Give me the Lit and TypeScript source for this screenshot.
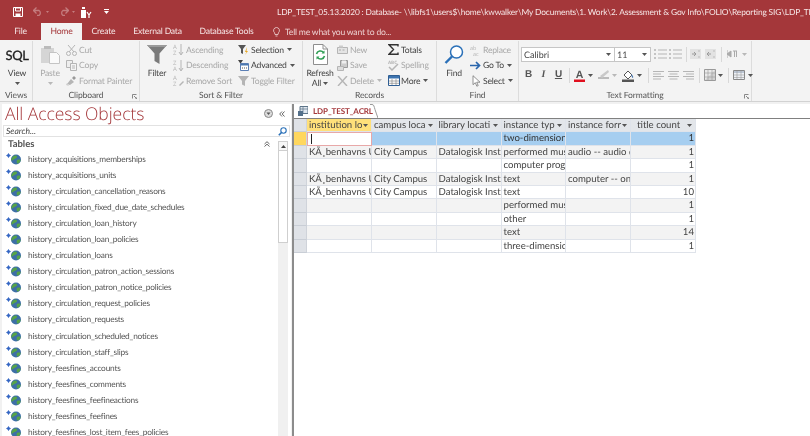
import { LitElement, html, css, svg } from "lit";
import { customElement } from "lit/decorators.js";

const TITLE = "LDP_TEST_05.13.2020 : Database- \\\\libfs1\\users$\\home\\kwwalker\\My Documents\\1. Work\\2. Assessment & Gov Info\\FOLIO\\Reporting SIG\\LDP_TEST_05.13.2020.accdb";

const ic = (w: number, h: number, body: unknown, cls = "") =>
  html`<svg class="ic ${cls}" width=${w} height=${h} viewBox="0 0 ${w} ${h}">${body}</svg>`;

const caret = (dis = false) =>
  html`<svg class="ic" width="5" height="3" viewBox="0 0 5 3"><path d="M0 0h5L2.5 3z" fill=${dis ? "#b8b8b8" : "#555"} /></svg>`;

const G = "#b5b5b5";
const icons: Record<string, unknown> = {
  cut: ic(11, 12, svg`<path d="M2 1l6 7M9 1L3 8" stroke="${G}" fill="none"/><circle cx="2.5" cy="9.5" r="2" stroke="${G}" fill="none"/><circle cx="8.5" cy="9.5" r="2" stroke="${G}" fill="none"/>`),
  copy: ic(11, 11, svg`<path d="M.5 .5h6v7h-6z" fill="#eee" stroke="${G}"/><path d="M4.5 3.5h6v7h-6z" fill="#f4f4f4" stroke="${G}"/><path d="M6 6h3M6 8h3" stroke="${G}"/>`),
  painter: ic(11, 11, svg`<path d="M1 9l4-5 3 3-4 3z" fill="${G}"/><path d="M6 3l2-2 2 2-2 2z" fill="#999"/><path d="M0 10l3 1-2-3z" fill="#ccc"/>`),
  asc: ic(11, 13, svg`<text x="0" y="5.5" font-size="6" fill="${G}" font-family="Open Sans">A</text><text x="0" y="12" font-size="6" fill="${G}" font-family="Open Sans">Z</text><path d="M8 1v10M6 9l2 3 2-3" stroke="${G}" fill="none"/>`),
  desc: ic(11, 13, svg`<text x="0" y="5.5" font-size="6" fill="${G}" font-family="Open Sans">Z</text><text x="0" y="12" font-size="6" fill="${G}" font-family="Open Sans">A</text><path d="M8 1v10M6 9l2 3 2-3" stroke="${G}" fill="none"/>`),
  rmsort: ic(11, 13, svg`<text x="0" y="5.5" font-size="6" fill="${G}" font-family="Open Sans">A</text><text x="0" y="12" font-size="6" fill="${G}" font-family="Open Sans">Z</text><path d="M6 11l4-4 1 1-4 4z" fill="${G}"/>`),
  selection: ic(11, 11, svg`<path d="M0 1h8L5 5v5L3 9V5z" fill="#555"/><path d="M9 3L7 8h1.5L7 11l3-4H8.5z" fill="#e9a825"/>`),
  advanced: ic(11, 11, svg`<path d="M0 0h5L3 3v2L2 4.5V3z" fill="#444"/><path d="M2.5 3.5h8v7h-8z" fill="#fff" stroke="#5b7fb5"/><path d="M3 4h7v1.5H3z" fill="#4a78b0"/><path d="M4 8h1M6 8h1M8 8h1" stroke="#555"/>`),
  toggle: ic(11, 11, svg`<path d="M0 1h11L7 6v5L4 9.5V6z" fill="${G}"/>`),
  newrec: ic(11, 9, svg`<path d="M.5 2.5h10v6H.5z" fill="#e4e4e4" stroke="${G}"/><path d="M2 .5h4v2H2z" fill="#ccc"/><path d="M2 5h2M5.5 5h2" stroke="#aaa"/>`),
  saverec: ic(11, 11, svg`<path d="M3.5 .5h7v7h-7z" fill="#ccc" stroke="#9a9a9a"/><path d="M5 .5h4v3H5z" fill="#eee"/><path d="M.5 6.5h6v4h-6z" fill="#ddd" stroke="${G}"/>`),
  delete: ic(11, 10, svg`<path d="M1 0l9 10M10 0L1 10" stroke="${G}" stroke-width="1.4"/>`),
  totals: ic(11, 11, svg`<path d="M10 2.5V.7H1l4.500 4.800L1 10.300h9V8.500" fill="none" stroke="#333" stroke-width="1.4"/>`),
  spelling: ic(11, 12, svg`<text x="0" y="5" font-size="4.5" font-weight="700" fill="${G}" font-family="Open Sans">ABC</text><path d="M1 8l3 3 6-6" fill="none" stroke="${G}" stroke-width="1.5"/>`),
  more: ic(12, 11, svg`<path d="M.5 .5h11v10H.5z" fill="#fff" stroke="#2f5e93"/><path d="M1 1h10v2.500H1z" fill="#3d74b0"/><path d="M1 6h10M1 8.300h10M4 4v6M8 4v6" stroke="#8a8a8a" stroke-width=".7"/>`),
  replace: ic(11, 12, svg`<text x="0" y="5.5" font-size="5.5" fill="${G}" font-family="Open Sans">ab</text><text x="3" y="11.5" font-size="5.5" fill="${G}" font-family="Open Sans">ac</text>`),
  goto: ic(11, 9, svg`<path d="M0 4.500h9M6 1l3.500 3.500L6 8" fill="none" stroke="#2a66ad" stroke-width="1.7"/>`),
  select: ic(10, 12, svg`<path d="M2 .7v9l2.300-2 1.500 3.500 1.400-.6L5.700 7.200H9z" fill="#fff" stroke="#777" stroke-width=".8"/>`),
};

const small = (icon: string, label: string, dis = false, hasCaret = false) => html`
  <div class="small ${dis ? "dis" : ""}">
    <span class="sicon">${icons[icon]}</span><span class="stext">${label}</span>${hasCaret
      ? html`<span class="scaret">${caret(dis)}</span>`
      : ""}
  </div>`;

const filterBig = ic(20, 19, svg`<path d="M0 0h20L12.500 8.500V19L7.500 16V8.500z" fill="#7a7a7a"/><path d="M0 0h20l-2 2H2z" fill="#9a9a9a"/>`);
const pasteBig = ic(21, 19, svg`<path d="M1 3h13v15H1z" fill="#d5d5d5"/><path d="M4 1h7v3H4z" fill="#bbb"/><path d="M9.500 7.500h7l3 3v8h-10z" fill="#fafafa" stroke="#c4c4c4"/>`);
const refreshBig = ic(15, 21, svg`<path d="M.5 .5h9.500l4.500 4.500v15.500H.5z" fill="#fff" stroke="#8e8e8e"/><path d="M10 .5v4.500h4.500" fill="none" stroke="#8e8e8e"/><path d="M3.500 10a4 4 0 0 1 7-1.500M11.500 12a4 4 0 0 1-7 1.500" fill="none" stroke="#2f9e55" stroke-width="1.6"/><path d="M11.500 6.500v3h-3zM3.500 15.500v-3h3z" fill="#2f9e55"/>`);
const findBig = ic(20, 19, svg`<circle cx="12.500" cy="7" r="6" fill="#fff" stroke="#2a70b8" stroke-width="1.5"/><path d="M8 11.500L1.500 18" stroke="#2a70b8" stroke-width="2.4"/>`);

const globe = ic(15, 12, svg`
  <path d="M2.500 0l1 1.500 1.500 1-1.500 1-1 1.500-1-1.500L0 2.500l1.500-1z" fill="#3567c4"/>
  <circle cx="10" cy="6.500" r="5" fill="#3d6fa6"/>
  <path d="M7 3.500c2-1.500 3.500-1 4 0s-1 2-2.500 2.500S6.300 8 5.500 7.500 6 4.500 7 3.500zM11 7c1.500-.7 3-.5 3.500 0s-1 3-2.500 3.500-1.500-2.800-1-3.500z" fill="#57a447"/>
`);

const T = ["acquisitions_memberships","acquisitions_units","circulation_cancellation_reasons","circulation_fixed_due_date_schedules","circulation_loan_history","circulation_loan_policies","circulation_loans","circulation_patron_action_sessions","circulation_patron_notice_policies","circulation_request_policies","circulation_requests","circulation_scheduled_notices","circulation_staff_slips","feesfines_accounts","feesfines_comments","feesfines_feefineactions","feesfines_feefines","feesfines_lost_item_fees_policies"];

const HEAD = ["institution lo", "campus loca", "library locati", "instance typ", "instance forr", "title count"];
const KU = "KÃ¸benhavns U";
const ROWS = [
  ["", "", "", "two-dimensional", "", "1"],
  [KU, "City Campus", "Datalogisk Inst", "performed music", "audio -- audio d", "1"],
  ["", "", "", "computer program", "", "1"],
  [KU, "City Campus", "Datalogisk Inst", "text", "computer -- on", "1"],
  [KU, "City Campus", "Datalogisk Inst", "text", "", "10"],
  ["", "", "", "performed music", "", "1"],
  ["", "", "", "other", "", "1"],
  ["", "", "", "text", "", "14"],
  ["", "", "", "three-dimensional", "", "1"],
];

@customElement("app-root")
export class AppRoot extends LitElement {
  static styles = css`
    :host { display: block; width: 810px; height: 436px; overflow: hidden; position: relative; background: #f1f1f1;
      font-family: Lato, "Liberation Sans", sans-serif; color: #444; font-size: 8.6px; filter: blur(0.3px); text-rendering: geometricPrecision; }
    .ic { display: block; flex: none; }
    .titlebar { background: #a4373a; height: 40px; color: #fff; display: flex; flex-direction: column; }
    .trow { height: 23px; display: flex; align-items: center; white-space: nowrap; }
    .qat { width: 277px; flex: none; display: flex; align-items: center; }
    .title { font-size: 8.4px; letter-spacing: -0.15px; color: #f6e6e6; }
    .s2 { width: 2px; flex: none; } .s3 { width: 3px; flex: none; } .s4 { width: 4px; flex: none; } .s5 { width: 5px; flex: none; }
    .s6 { width: 6px; flex: none; } .s8 { width: 8px; flex: none; } .s10 { width: 10px; flex: none; } .s12 { width: 12px; flex: none; } .s13 { width: 13px; flex: none; }
    .tabs { height: 17px; display: flex; align-items: center; }
    .tab { flex: none; text-align: center; color: #f5e4e4; font-size: 8.6px; letter-spacing: -0.2px; line-height: 17px; white-space: nowrap; }
    .tab.home { background: #f3f3f3; color: #a4373a; height: 17px; }
    .w41 { width: 41px; } .w43 { width: 43px; } .w65 { width: 65px; } .w73 { width: 73px; }
    .tell { display: flex; align-items: center; gap: 5px; margin-left: 10px; color: #eccfcf; font-size: 8.6px; letter-spacing: -0.2px; white-space: nowrap; }

    .ribbon { height: 62px; background: #f3f3f3; border-bottom: 1px solid #d2d2d2; box-sizing: border-box; display: flex; padding-top: 1px; }
    .group { flex: none; box-sizing: border-box; border-right: 1px solid #dcdcdc; height: 60px; padding-top: 1px; display: flex; flex-direction: column; position: relative; }
    .g33 { width: 33px; } .g107 { width: 107px; } .g163 { width: 163px; } .g134 { width: 134px; } .g82 { width: 82px; } .g233 { width: 233px; }
    .body { height: 48px; display: flex; flex: none; padding-left: 4px; }
    .glabel { text-align: center; line-height: 11px; font-size: 8.5px; letter-spacing: -0.1px; color: #555; }
    .launch { position: absolute; right: 2px; bottom: 2px; }
    .big { width: 26px; flex: none; display: flex; flex-direction: column; align-items: center; }
    .bigicon { height: 25px; display: flex; align-items: center; justify-content: center; flex: none; }
    .biglabel { line-height: 12px; height: 12px; white-space: nowrap; color: #444; font-size: 8.6px; letter-spacing: -0.2px; }
    .bigcaret { height: 8px; display: flex; align-items: center; gap: 2px; white-space: nowrap; line-height: 12px; }
    .dis .biglabel { color: #a8a8a8; }
    .sql { font-size: 13px; letter-spacing: -0.3px; color: #222; -webkit-text-stroke: 0.3px #222; }
    .col { display: flex; flex-direction: column; flex: none; }
    .gap3 { margin-left: 3px; } .gap4 { margin-left: 4px; }
    .c65 { width: 65px; } .c51 { width: 51px; }
    .small { height: 15.5px; display: flex; align-items: center; white-space: nowrap; }
    .sicon { width: 11px; display: flex; justify-content: center; margin-right: 2px; flex: none; }
    .stext { font-size: 8.6px; letter-spacing: -0.2px; color: #444; }
    .small.dis .stext { color: #a9a9a9; }
    .scaret { margin-left: 3px; }

    .tfbody { height: 48px; flex: none; padding-left: 2px; display: flex; flex-direction: column; }
    .tfrow { display: flex; align-items: center; }
    .r1 { margin-top: 4px; height: 16px; }
    .r2 { margin-top: 5px; height: 16px; }
    .combo { height: 15px; box-sizing: border-box; background: #fff; border: 1px solid #c6c6c6; display: flex; align-items: center; justify-content: space-between; padding: 0 3px 0 2px; font-size: 9px; color: #444; flex: none; }
    .cf { width: 94px; } .cs { width: 37px; margin-left: -1px; }
    .fb { width: 15px; text-align: center; font-size: 10px; color: #555; flex: none; line-height: 14px; font-family: "Liberation Sans", sans-serif; }
    .bold { font-weight: 700; } .ital { font-style: italic; font-family: "Liberation Serif", serif; font-weight: 700; } .und { text-decoration: underline; font-weight: 700; }
    .vsep { width: 1px; height: 15px; background: #d8d8d8; flex: none; }

    .content { display: flex; height: 334px; padding-top: 2px; box-sizing: border-box; }
    .nav { width: 289px; margin-left: 2px; flex: none; background: #fff; display: flex; flex-direction: column; overflow: hidden; }
    .navhead { height: 21px; display: flex; align-items: center; padding: 0 3px 2px; box-sizing: border-box; flex: none; }
    .navtitle { font-size: 17.5px; color: #a4373a; flex: 1; white-space: nowrap; font-family: "Open Sans", sans-serif; font-weight: 300; letter-spacing: -0.05px; }
    .search { height: 12px; margin: 0 1px; flex: none; box-sizing: border-box; border: 1px solid #e2e2e2; display: flex; align-items: center; justify-content: space-between; font-style: italic; font-size: 8.6px; color: #444; padding: 0 2px; }
    .navbody { flex: 1; display: flex; min-height: 0; }
    .list { flex: 1; min-width: 0; }
    .tablesh { height: 14px; display: flex; align-items: center; justify-content: space-between; padding: 0 8px 0 6px; box-sizing: border-box; font-weight: 700; color: #555; font-size: 9.5px; }
    .row { height: 16.06px; display: flex; align-items: center; padding-left: 4px; white-space: nowrap; }
    .rowt { margin-left: 7px; font-size: 8.3px; letter-spacing: -0.2px; color: #555; }
    .sb { width: 10px; margin: 4px 3px 0 0; box-sizing: border-box; flex: none; background: #f0f0f0; display: flex; flex-direction: column; }
    .sbup { height: 10px; background: #f7f7f7; border: 1px solid #cfcfcf; box-sizing: border-box; display: flex; align-items: center; justify-content: center; flex: none; }
    .sbth { height: 92px; background: #fff; border: 1px solid #cfcfcf; border-top: 0; box-sizing: border-box; flex: none; }
    .main { flex: 1; min-width: 0; border-left: 2px solid #8c8c8c; margin-left: 1px; background: #fff; display: flex; flex-direction: column; }
    .doctabs { height: 15px; flex: none; box-sizing: border-box; border-bottom: 1px solid #808080; background: #fff; padding-left: 1px; display: flex; align-items: flex-end; }
    .doctab { position: relative; height: 14px; width: 80px; display: flex; align-items: center; padding-left: 3px; gap: 5px; box-sizing: border-box; font-size: 8px; letter-spacing: -0.1px; font-weight: 700; color: #a4373a; white-space: nowrap; }
    .tcurve { position: absolute; right: -3px; top: 0; }
    .grid { display: grid; grid-template-columns: 13px 65px 64.5px 65px 64.5px 65px 65px; grid-auto-rows: 13.4px; font-size: 9.6px; color: #444; width: 402px; }
    .c { box-sizing: border-box; border-right: 1px solid #dfe3ea; border-bottom: 1px solid #dfe3ea; overflow: hidden; white-space: nowrap; padding: 1px 2px 0; line-height: 12.4px; background: #fff; }
    .c.alt { background: #f3f3f3; }
    .c.sel { background: #a6cef0; color: #333; }
    .c.num { text-align: right; padding-right: 1px; }
    .c.cur { background: #fff; border: 1px solid #e8a8a8; padding: 0 2px; }
    .cursor { display: block; width: 1px; height: 10px; margin: 1px 0 0 1px; background: #222; }
    .h { background: #e3e6ea; display: flex; align-items: center; padding: 1px 3px 0 2px; }
    .h span { flex: 1; min-width: 0; overflow: hidden; }
    .h.last span { padding-left: 4px; }
    .h.on { background: #ffe07a; }
    .p { background: #dfe2e7; border-right: 1px solid #cfd3da; border-bottom: 1px solid #c9ced6; box-sizing: border-box; }
    .p.on { background: #ffd75e; }
    .empty { flex: 1; background: #fff; }
  `;

  renderTF() {
    const box3 = (c: string) => ic(13, 12, svg`<path d="M0 2h2M0 6h2M0 10h2" stroke="${c}" stroke-width="1.5"/><path d="M4 2h9M4 6h9M4 10h9" stroke="${c}"/>`);
    const indent = (flip: boolean) => ic(11, 10, svg`<rect width="11" height="10" fill="#e2e2e2"/><path d="${flip ? "M6 5H2M4 3L2 5l2 2" : "M2 5h4M4 3l2 2-2 2"}" stroke="#9a9a9a" fill="none"/><path d="M8 2h2M8 8h2" stroke="#bbb"/>`);
    const align = (k: number) => ic(11, 9, svg`<path d="M0 .5h11M${k} 3h8M0 5.5h11M${k} 8h8" stroke="${G}"/>`);
    return html`
      <div class="tfbody">
        <div class="tfrow r1">
          <div class="combo cf"><span>Calibri</span>${caret()}</div>
          <div class="combo cs"><span>11</span>${caret()}</div>
          <span class="s3"></span>${box3("#b5b5b5")}<span class="s2"></span>${box3("#b5b5b5")}
          <span class="s4"></span><span class="vsep"></span><span class="s3"></span>
          ${indent(false)}<span class="s4"></span>${indent(true)}
          <span class="s5"></span><span class="vsep"></span><span class="s5"></span>
          ${ic(11, 8, svg`<path d="M0 0v8M0 4l4-3v6z" fill="#aaa" stroke="#aaa"/><path d="M6 1h4M7.5 1v6M9.500 1v6" stroke="#aaa"/>`)}
          <span class="s4"></span>${caret(true)}
        </div>
        <div class="tfrow r2">
          <span class="fb bold">B</span><span class="fb ital">I</span><span class="fb und">U</span>
          <span class="s3"></span><span class="vsep"></span><span class="s3"></span>
          ${ic(13, 13, svg`<text x="6.5" y="9" text-anchor="middle" font-size="10.5" font-weight="700" font-family="Liberation Sans" fill="#555">A</text><rect x="1" y="10.5" width="11" height="2.5" fill="#e00f1e"/>`)}
          <span class="s2"></span>${caret()}<span class="s5"></span>
          ${ic(12, 12, svg`<path d="M0 9h11" stroke="#bbb" stroke-width="2"/><path d="M2 7l8-6 1 2-7 6z" fill="#c9c9c9"/>`)}
          <span class="s2"></span>${caret(true)}<span class="s5"></span>
          ${ic(12, 13, svg`<path d="M2 6l4-4 4 4-4 4z" fill="#fff" stroke="#555"/><path d="M9 5c2 1 2.5 3 2 4-1 0-1.5-2-2-4z" fill="#4a78b0"/><rect x="0" y="10.5" width="12" height="2.5" fill="#555"/>`)}
          <span class="s3"></span>${caret()}<span class="s6"></span>
          <span class="vsep"></span><span class="s4"></span>
          ${align(0)}<span class="s4"></span>${align(1.5)}<span class="s4"></span>${align(3)}
          <span class="s5"></span><span class="vsep"></span><span class="s4"></span>
          ${ic(12, 12, svg`<path d="M.5 .5h11v11H.5z" fill="#eaeaea" stroke="#999"/><path d="M1 11L11 1v10z" fill="#d0d0d0"/><path d="M4 1v10M8 1v10M1 4h10M1 8h10" stroke="#999" stroke-width=".6"/>`)}
          <span class="s2"></span>${caret()}<span class="s5"></span>
          <span class="vsep"></span><span class="s4"></span>
          ${ic(12, 10, svg`<path d="M.5 .5h11v9H.5z" fill="#eef1f5" stroke="#888"/><path d="M1 1h10v2H1z" fill="#bcc6d4"/><path d="M4 1v8M8 1v8M1 5h10M1 7.5h10" stroke="#9a9a9a" stroke-width=".6"/>`)}
          <span class="s3"></span>${caret()}
        </div>
      </div>`;
  }

  render() {
    const launcher = html`<span class="launch">${ic(5, 5, svg`<path d="M.5 4.5v-4h4" stroke="#888" fill="none"/><path d="M2 2l3 3M5 3v2H3" stroke="#888" fill="none"/>`)}</span>`;
    return html`
      <div class="titlebar">
        <div class="trow">
          <div class="qat">
            <span class="s13"></span>
            ${ic(10, 10, svg`<path d="M.5 .5h9v9H.5z" fill="none" stroke="#fff"/><path d="M2.5 1h5v3h-5z" fill="none" stroke="#fff"/><path d="M2.5 6.5h5v3h-5z" fill="#fff"/>`)}
            <span class="s10"></span>
            ${ic(10, 9, svg`<path d="M1 3.5h5a3 3 0 0 1 0 5H4M3.5 .5l-3 3 3 3" fill="none" stroke="#c47c7e" stroke-width="1.3"/>`)}
            <span class="s3"></span>${ic(3, 2, svg`<path d="M0 0h3L1.5 2z" fill="#c47c7e"/>`)}
            <span class="s10"></span>
            ${ic(10, 9, svg`<path d="M9 3.5H4a3 3 0 0 0 0 5h2M6.5 .5l3 3-3 3" fill="none" stroke="#c47c7e" stroke-width="1.3"/>`)}
            <span class="s3"></span>${ic(3, 2, svg`<path d="M0 0h3L1.5 2z" fill="#c47c7e"/>`)}
            <span class="s5"></span>
            ${ic(12, 12, svg`<path d="M1 4h5v8H1z" fill="#fff"/><path d="M2 1h3v2H2z" fill="#fff"/><path d="M7 6l2 3 2-3M9 9v3" stroke="#fff" fill="none" stroke-width="1.2"/>`)}
            <span class="s12"></span>
            ${ic(5, 5, svg`<path d="M0 0h5v1H0zM0 2h5L2.5 5z" fill="#fff"/>`)}
          </div>
          <div class="title">${TITLE}</div>
        </div>
        <div class="tabs">
          <div class="tab w41">File</div>
          <div class="tab w41 home">Home</div>
          <div class="tab w43">Create</div>
          <div class="tab w65">External Data</div>
          <div class="tab w73">Database Tools</div>
          <div class="tell">${ic(7, 10, svg`<path d="M3.5 .5a3 3 0 0 1 2 5.200L5 7.5H2L1.5 5.700a3 3 0 0 1 2-5.200zM2.500 9h2" fill="none" stroke="#f0d8d8" stroke-width=".8"/>`)}<span>Tell me what you want to do...</span></div>
        </div>
      </div>

      <div class="ribbon">
        <div class="group g33">
          <div class="body">
            <div class="big"><div class="bigicon"><span class="sql">SQL</span></div><div class="biglabel">View</div><div class="bigcaret">${caret()}</div></div>
          </div>
          <div class="glabel">Views</div>
        </div>
        <div class="group g107">
          <div class="body">
            <div class="big dis"><div class="bigicon">${pasteBig}</div><div class="biglabel">Paste</div><div class="bigcaret">${caret(true)}</div></div>
            <div class="col gap3">${small("cut", "Cut", true)}${small("copy", "Copy", true)}${small("painter", "Format Painter", true)}</div>
          </div>
          <div class="glabel">Clipboard</div>${launcher}
        </div>
        <div class="group g163">
          <div class="body">
            <div class="big"><div class="bigicon">${filterBig}</div><div class="biglabel">Filter</div></div>
            <div class="col gap3 c65">${small("asc", "Ascending", true)}${small("desc", "Descending", true)}${small("rmsort", "Remove Sort", true)}</div>
            <div class="col">${small("selection", "Selection", false, true)}${small("advanced", "Advanced", false, true)}${small("toggle", "Toggle Filter", true)}</div>
          </div>
          <div class="glabel">Sort &amp; Filter</div>
        </div>
        <div class="group g134">
          <div class="body">
            <div class="big"><div class="bigicon">${refreshBig}</div><div class="biglabel">Refresh</div><div class="bigcaret"><span class="biglabel">All</span>${caret()}</div></div>
            <div class="col gap4 c51">${small("newrec", "New", true)}${small("saverec", "Save", true)}${small("delete", "Delete", true, true)}</div>
            <div class="col">${small("totals", "Totals")}${small("spelling", "Spelling", true)}${small("more", "More", false, true)}</div>
          </div>
          <div class="glabel">Records</div>
        </div>
        <div class="group g82">
          <div class="body">
            <div class="big"><div class="bigicon">${findBig}</div><div class="biglabel">Find</div></div>
            <div class="col gap3">${small("replace", "Replace", true)}${small("goto", "Go To", false, true)}${small("select", "Select", false, true)}</div>
          </div>
          <div class="glabel">Find</div>
        </div>
        <div class="group g233">
          ${this.renderTF()}
          <div class="glabel">Text Formatting</div>${launcher}
        </div>
      </div>

      <div class="content">
        <div class="nav">
          <div class="navhead">
            <div class="navtitle">All Access Objects</div>
            ${ic(9, 9, svg`<circle cx="4.5" cy="4.5" r="4" fill="#ddd" stroke="#888"/><path d="M2.5 3.5h4L4.5 6z" fill="#555"/>`)}
            <span class="s6"></span>
            ${ic(6, 6, svg`<path d="M3 .5L.7 3 3 5.5M5.5 .5L3.200 3l2.300 2.500" fill="none" stroke="#666"/>`)}
            <span class="s3"></span>
          </div>
          <div class="search"><span>Search...</span>
            ${ic(9, 9, svg`<circle cx="5.5" cy="3.5" r="2.7" fill="#fff" stroke="#2a70b8" stroke-width="1.1"/><path d="M3.500 5.500L.8 8.200" stroke="#2a70b8" stroke-width="1.6"/>`)}
          </div>
          <div class="navbody">
            <div class="list">
              <div class="tablesh"><span>Tables</span>
                ${ic(6, 6, svg`<path d="M.5 3L3 .7 5.5 3M.5 5.500L3 3.200l2.500 2.300" fill="none" stroke="#666"/>`)}
              </div>
              ${T.map((t) => html`<div class="row">${globe}<span class="rowt">history_${t}</span></div>`)}
            </div>
            <div class="sb">
              <div class="sbup">${ic(5, 3, svg`<path d="M0 3h5L2.5 0z" fill="#444"/>`)}</div>
              <div class="sbth"></div>
            </div>
          </div>
        </div>
        <div class="main">
          <div class="doctabs">
            <div class="doctab">
              ${ic(10, 10, svg`<path d="M2 .5h8v7H2z" fill="#dfe6ee" stroke="#5d7488"/><path d="M2 3h8M5 1v6" stroke="#5d7488" stroke-width=".7"/><path d="M0 5h5v5H0z" fill="#54708a"/>`)}
              <span>LDP_TEST_ACRL</span>
              <svg class="tcurve" width="8" height="14" viewBox="0 0 8 14"><path d="M0 .5h2c2 0 2 2 3 5s2 6 3 8.500" fill="#fff" stroke="#9a9a9a"/></svg>
            </div>
          </div>
          <div class="grid">
            <div class="p"></div>
            ${HEAD.map((h, i) => html`<div class="c h ${i === 0 ? "on" : ""} ${i === 5 ? "last" : ""}"><span>${h}</span>${caret()}</div>`)}
            ${ROWS.map((r, ri) => html`
              <div class="p ${ri === 0 ? "on" : ""}"></div>
              ${r.map((v, ci) => {
                const sel = ri === 0;
                const cur = sel && ci === 0;
                const alt = !sel && ri % 2 === 1;
                return html`<div class="c ${sel ? "sel" : ""} ${alt ? "alt" : ""} ${cur ? "cur" : ""} ${ci === 5 ? "num" : ""}">${cur ? html`<span class="cursor"></span>` : v}</div>`;
              })}
            `)}
          </div>
          <div class="empty"></div>
        </div>
      </div>
    `;
  }
}
